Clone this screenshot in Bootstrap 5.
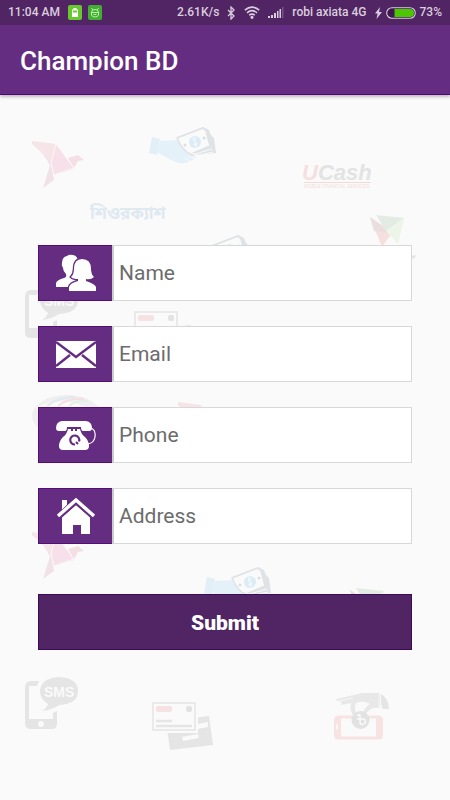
<!DOCTYPE html>
<html lang="en">
<head>
<meta charset="utf-8">
<meta name="viewport" content="width=device-width, initial-scale=1">
<title>Champion BD</title>
<link href="https://cdn.jsdelivr.net/npm/bootstrap@5.3.0/dist/css/bootstrap.min.css" rel="stylesheet">
<style>
body { font-family: Roboto, "Noto Sans", sans-serif; background: #fafafa; }
.status { background: #512463; color: #d9cedd; height: 25px; padding: 0 8px; font-size: 12px; font-weight: 500; line-height: 25px; }
.appbar { background: #652d81; color: #fff; height: 70px; padding: 2px 20px 0; border-bottom: 1px solid #52047a; box-shadow: 0 2px 3px rgba(0,0,0,.25); z-index: 2; }
.appbar h1 { font-size: 26px; font-weight: 500; line-height: 32px; }
.wallpaper { inset: 0; z-index: 0; }
.signup { padding: 150px 38px 40px; z-index: 1; }
.fields { gap: 25px; }
.field { height: 56px; }
.field .input-group-text { width: 75px; background: #652d81; border: 1px solid #560c78; border-radius: 0; color: #fff; }
.field .form-control { border: 1px solid #d8d8d8; border-left: 2px solid #ccc; border-radius: 0; padding: 2px 5px 0; font-size: 21px; color: #333; background: #fff; }
.field .form-control::placeholder { color: #6c6c6c; opacity: 1; }
.send { margin-top: 50px; height: 56px; border-radius: 0; border: 1px solid #3b0b59; background: #512463; color: #fff; font-size: 21px; font-weight: 900; padding: 4px 0 0; }
.send:hover { background: #652d81; color: #fff; }
</style>
</head>
<body class="min-vh-100 d-flex flex-column">
<div class="status d-flex align-items-center justify-content-between text-nowrap">
  <div class="d-flex align-items-center">
    <span>11:04 AM</span>
    <svg class="ms-2" width="14" height="15" viewBox="0 0 14 15" aria-hidden="true"><rect width="14" height="15" rx="2" fill="#68c92e"/><path d="M5.500 3h3v1.500H10V12H4V4.500h1.500z" fill="#fff"/><path d="M5 5.500h4v2H5z" fill="#68c92e"/></svg>
    <svg class="ms-1" width="16" height="15" viewBox="-2 0 16 15" aria-hidden="true"><rect width="14" height="15" rx="2" fill="#43ae32"/><g fill="none" stroke="#c4f5b9" stroke-width=".9"><path d="M3.500 3L5 5M10.500 3L9 5M3 7.500h8M3.500 7Q4 4.500 7 4.500T10.500 7v3Q10 12 7 12T3.500 10z"/><path d="M5.500 9.500h3"/></g></svg>
  </div>
  <div class="d-flex align-items-center">
    <span>2.61K/s</span>
    <svg class="ms-2" width="9" height="14" viewBox="0 0 9 14" fill="none" stroke="#d9cedd" stroke-width="1.300" aria-hidden="true"><path d="M1 4l6 6-3 3V1l3 3-6 6"/></svg>
    <svg class="ms-2" width="16" height="13" viewBox="0 0 16 13" fill="none" stroke="#d9cedd" stroke-width="1.600" aria-hidden="true"><path d="M.8 4.200Q8-2 15.200 4.200M3 6.800Q8 2.500 13 6.800M5.200 9.200Q8 7 10.800 9.200"/><circle cx="8" cy="11.300" r=".8" fill="#d9cedd"/></svg>
    <svg class="ms-2" width="16" height="11" viewBox="0 0 16 11" aria-hidden="true"><path d="M0 9h2v2H0zM3 8h2v3H3zM6 6h2v5H6zM9 4h1.500v7H9zM11.500 2H13v9h-1.500z" fill="#d9cedd"/><path d="M14 0h1.500v11H14z" fill="#765382"/></svg>
    <span class="ms-2">robi axiata 4G</span>
    <svg class="ms-2" width="7" height="12" viewBox="0 0 7 12" aria-hidden="true"><path d="M5 0L0 6.500h2.600L1.500 12 7 5H4z" fill="#d9cedd"/></svg>
    <svg class="ms-1 me-1" width="30" height="12" viewBox="0 0 30 12" aria-hidden="true"><rect x=".7" y=".7" width="28.600" height="10.600" rx="5.300" fill="#3d1750" stroke="#d9cedd" stroke-width="1.100"/><path d="M8.500 2H24a4 4 0 0 1 0 8H8.500z" fill="#4bc600"/></svg>
    <span>73%</span>
  </div>
</div>
<header class="appbar d-flex align-items-center position-relative"><h1 class="m-0">Champion BD</h1></header>
<main class="flex-grow-1 position-relative overflow-hidden">
  <svg class="wallpaper position-absolute w-100 h-100" viewBox="0 95 450 705" preserveAspectRatio="xMidYMin slice" aria-hidden="true">
    <defs>
      <g id="bird"><path d="M0 0l24 3-5 18z" fill="#f7e4e8"/><path d="M0 0l19 21-1 4Q14 14 0 3z" fill="#f1e2e5"/><path d="M24 3l18 25-20 6-3-13z" fill="#f7e0ea"/><path d="M36 17l10-3 6 5-6 1-4 7z" fill="#f5dfe5"/><path d="M19 21l3 18-11 8z" fill="#f0e2e5"/><path d="M24 3l-5 19 3 12 20-7M24 3l12 14" fill="none" stroke="#fafafa"/></g>
      <g id="cash"><path d="M3 10l8 2-3 16-8-2z" fill="#e2eff7"/><path d="M11 14l20-1 12 15 5 2q-8 7-18 6Q22 34 8 25z" fill="#e5f1f8"/><path d="M54 0l6 3 2 5 3 3 2 15-28 3 6-3-17-16z" fill="#dfe3e6"/><path d="M28 11l26-10 3 3 4 15-19 8q-8-2-14-16z" fill="#fafafa" stroke="#dfe3e6" stroke-width="1.500"/><circle cx="46" cy="15" r="6" fill="#dcecf6"/><circle cx="36" cy="18" r="1.500" fill="#dadfe2"/><circle cx="55" cy="11" r="1.500" fill="#dadfe2"/><path d="M48 12q-4-2-4 1 0 1 2 2t2 2q0 3-4 0M45 10l2 10" fill="none" stroke="#fafafa" stroke-width=".8"/><path d="M39 29l8 3M36 31l7 4M42 26l10 3M46 29l18-4M46 27l17-5" stroke="#fafafa"/></g>
      <g id="sms"><path d="M14 4H6Q0 4 0 11v35q0 6 6 6h21q5 0 5-6V34l-4 2v6H4V9h8z" fill="#e5e5e5"/><circle cx="16" cy="47" r="3" fill="#fafafa"/><path d="M23 27Q15 22 15 14 16 1 34 0q19 1 19 14T34 28q-7 5-17 6 4-2 6-7z" fill="#e5e5e5"/><text x="19" y="20" font-family="Liberation Sans, sans-serif" font-weight="700" font-size="14" fill="#fafafa">SMS</text></g>
      <g id="cards"><path d="M14 19l43-5 4 29-43 5z" fill="#e5e5e5"/><path d="M40 23l16-3v5l-16 3zM30 35l16-3 1 4-16 3z" fill="#fafafa"/><path d="M0 0h44v29H0z" fill="#fafafa" stroke="#fafafa" stroke-width="4"/><path d="M1 1h42v27H1z" fill="#fafafa" stroke="#e5e5e5" stroke-width="1.500"/><rect x="4" y="4" width="16" height="6" rx="2" fill="#f6e2e2"/><rect x="34" y="4" width="6" height="6" rx="2" fill="#e2e2e2"/><path d="M4 19h16M4 24h36" stroke="#e5e5e5" stroke-width="2.500"/></g>
      <g id="prism"><path d="M0 2l22 16-10 14z" fill="#f6dfdf"/><path d="M0 2l13 9 4 7-13-2z" fill="#eadede"/><path d="M6 0l28 3-18 13z" fill="#e4ebe4"/><path d="M34 3l-6 26-12-13z" fill="#ecf5e7"/></g>
    </defs>
    <use href="#bird" x="32" y="141"/>
    <use href="#cash" x="149" y="127"/>
    <text x="90" y="219" font-family="Noto Sans Bengali, Lohit Bengali, FreeSans, sans-serif" font-weight="700" font-size="17" fill="#dfe9f1">শিওরক্যাশ</text>
    <g font-family="Liberation Sans, sans-serif" font-style="italic" font-weight="700"><text x="302" y="180" font-size="22" fill="#f5dfe1">U<tspan fill="#e3e3e3">Cash</tspan></text><path d="M304 182.500h67" stroke="#f3dada"/><text x="304" y="188" font-size="4.500" font-weight="400" fill="#f3dddd">MOBILE FINANCIAL SERVICES</text></g>
    <use href="#cash" x="184" y="235"/>
    <use href="#prism" x="370" y="215"/>
    <path d="M411 256l5-1-1 3-4 1z" fill="#e5e5e5"/>
    <use href="#sms" x="25" y="286"/>
    <use href="#cards" x="134" y="311"/>
    <ellipse cx="67" cy="416" rx="35" ry="21" fill="#efefef"/><path d="M36 407q28-12 57 3l-8 8H40z" fill="#fafafa"/><path d="M47 406q11-9 28-9" fill="none" stroke="#e1e8f2" stroke-width="2"/><path d="M58 406q11-9 26-7" fill="none" stroke="#f4dfe2" stroke-width="2"/><path d="M69 406q8-6 19-5" fill="none" stroke="#e2efe7" stroke-width="2"/>
    <use href="#bird" x="178" y="402"/>
    <use href="#bird" x="32" y="532"/>
    <use href="#cash" x="204" y="567"/>
    <use href="#prism" x="350" y="588"/>
    <use href="#sms" x="25" y="677"/>
    <use href="#cards" x="152" y="702"/>
    <rect x="335.500" y="717" width="46" height="21" rx="3" fill="none" stroke="#f7e3e3" stroke-width="3"/><path d="M335 717h6v22h-6zM376 717h6v22h-6z" fill="#f7e3e3"/><ellipse cx="337" cy="727" rx="1" ry="3" fill="#fafafa"/>
    <path d="M336 699l18-4 8-2h16v15q-8-2-14 9l-4 4-6-4q-5-8-3-14l-10 2 1-3-5-1z" fill="#e8e8e8"/><path d="M356 703q8-3 14 1-6 4-7 9h-7q-2-6 0-10z" fill="#fafafa"/><path d="M381 694q8 5 8 15h-6q-3-4-2-15z" fill="#e5e5e5"/><path d="M378 693h2v15h-2z" fill="#eee"/><path d="M338 701l15-3" stroke="#fafafa" stroke-width=".8"/><circle cx="360.500" cy="720" r="9" fill="#e2e2e2"/><path d="M357 716q3-3 3 0v7q2 3 5 0 1-4-2-4M357 719h6" fill="none" stroke="#fafafa" stroke-width="1.500"/>
  </svg>
  <form class="signup position-relative d-flex flex-column" onsubmit="return false">
    <div class="fields d-flex flex-column">
      <div class="input-group field">
        <label class="input-group-text justify-content-center p-0" for="name" aria-label="Name">
          <svg width="42" height="38" viewBox="0 0 42 38" aria-hidden="true"><path d="M1 33v-4q1-3 8-5 3-1 2-4-3-3-3-6-2-3-1-5 0-6 5-7 2-2 6-1 5 1 5 7v10l-3 14v1z" fill="#fff"/><path d="M14 37v-4q1-4 9-6v-2q-5 0-7-2 3-3 3-8 0-10 8-10 9 0 9 10 0 5 3 8-3 3-8 2v2q9 3 10 6v4z" fill="#fff" stroke="#652d81" stroke-width="2.500" paint-order="stroke"/></svg>
        </label>
        <input class="form-control shadow-none" id="name" type="text" placeholder="Name">
      </div>
      <div class="input-group field">
        <label class="input-group-text justify-content-center p-0" for="email" aria-label="Email">
          <svg width="40" height="27" viewBox="0 0 40 27" aria-hidden="true"><path d="M0 0h40v27H0z" fill="#fff"/><path d="M0 1l20 15L40 1M0 25l14-11M40 25L26 14" fill="none" stroke="#652d81" stroke-width="2.500"/></svg>
        </label>
        <input class="form-control shadow-none" id="email" type="email" placeholder="Email">
      </div>
      <div class="input-group field">
        <label class="input-group-text justify-content-center p-0" for="phone" aria-label="Phone">
          <svg width="40" height="29" viewBox="0 0 40 29" aria-hidden="true"><path d="M0 7Q0 1 6 0h24q6 1 6 7 0 3-3 3h-6q-2 0-2-4H11q0 4-2 4H3Q0 10 0 7z" fill="#fff"/><path d="M12 8h3v2h2V8h2v2h2V8h3q1 5 5 8 4 4 4 9 0 4-4 4H7q-4 0-4-4 0-5 4-9 4-3 5-8z" fill="#fff"/><path d="M35 7q5 2 4 9-1 6-7 7" fill="none" stroke="#fff" stroke-width="1.200"/><path d="M19 23.500a4.500 4.500 0 1 1 4-3" fill="none" stroke="#652d81" stroke-width="2.200"/><path d="M20 21l2 2" stroke="#652d81" stroke-width="2"/></svg>
        </label>
        <input class="form-control shadow-none" id="phone" type="tel" placeholder="Phone">
      </div>
      <div class="input-group field">
        <label class="input-group-text justify-content-center p-0" for="address" aria-label="Address">
          <svg width="40" height="38" viewBox="0 0 40 38" fill="#fff" aria-hidden="true"><path d="M6 3h5v5l-5 5zM20 8l14 12v17h-9v-9h-8v9H6V20z"/><path d="M2 20L20 4l18 16" fill="none" stroke="#652d81" stroke-width="6"/><path d="M2 19L20 3l18 16" fill="none" stroke="#fff" stroke-width="3.500"/></svg>
        </label>
        <input class="form-control shadow-none" id="address" type="text" placeholder="Address">
      </div>
    </div>
    <button class="btn send w-100" type="submit">Submit</button>
  </form>
</main>
<script src="https://cdn.jsdelivr.net/npm/bootstrap@5.3.0/dist/js/bootstrap.bundle.min.js"></script>
</body>
</html>
